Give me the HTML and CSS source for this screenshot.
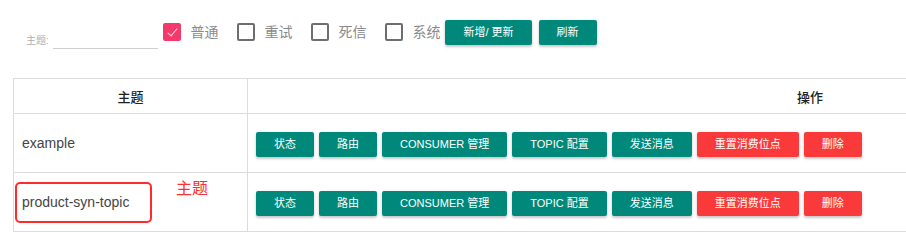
FILE: index.html
```html
<!DOCTYPE html>
<html lang="zh-CN">
<head>
    <meta charset="UTF-8">
    <title>Topic</title>
    <link rel="stylesheet" href="styles.css">
</head>
<body>
    <div class="toolbar">
        <div class="field">
            <span class="field-label">主题:</span>
            <input type="text" class="field-input">
        </div>
        <label class="check checked"><span class="box"></span><span class="check-text">普通</span></label>
        <label class="check"><span class="box"></span><span class="check-text">重试</span></label>
        <label class="check"><span class="box"></span><span class="check-text">死信</span></label>
        <label class="check last"><span class="box"></span><span class="check-text">系统</span></label>
        <button class="btn top-btn">新增/ 更新</button>
        <button class="btn top-btn">刷新</button>
    </div>

    <table class="topics">
        <thead>
            <tr>
                <th class="col-topic">主题</th>
                <th>操作</th>
            </tr>
        </thead>
        <tbody>
            <tr>
                <td class="topic-name">example</td>
                <td>
                    <div class="actions">
                        <button class="btn">状态</button>
                        <button class="btn">路由</button>
                        <button class="btn">CONSUMER 管理</button>
                        <button class="btn">TOPIC 配置</button>
                        <button class="btn">发送消息</button>
                        <button class="btn btn-red">重置消费位点</button>
                        <button class="btn btn-red">删除</button>
                    </div>
                </td>
            </tr>
            <tr>
                <td class="topic-name">product-syn-topic</td>
                <td>
                    <div class="actions">
                        <button class="btn">状态</button>
                        <button class="btn">路由</button>
                        <button class="btn">CONSUMER 管理</button>
                        <button class="btn">TOPIC 配置</button>
                        <button class="btn">发送消息</button>
                        <button class="btn btn-red">重置消费位点</button>
                        <button class="btn btn-red">删除</button>
                    </div>
                </td>
            </tr>
        </tbody>
    </table>

    <!-- annotation on the screenshot -->
    <div class="mark-box"></div>
    <div class="mark-text">主题</div>
</body>
</html>
```

FILE: styles.css
```css
html, body {
    overflow: hidden;
}
body {
    margin: 0;
    padding: 0;
    background-color: #fff;
    font-family: Roboto, "Noto Sans CJK SC", sans-serif;
    position: relative;
}
.toolbar {
    display: flex;
    align-items: flex-start;
    padding: 20px 0 0 26px;
    height: 78px;
    box-sizing: border-box;
}
.field {
    display: flex;
    align-items: flex-end;
    height: 29px;
}
.field-label {
    font-size: 10px;
    line-height: 12px;
    color: #b0b0b0;
    margin-right: 5px;
    margin-bottom: 2px;
}
.field-input {
    width: 105px;
    height: 16px;
    padding: 0;
    border: none;
    border-bottom: 1px solid #cfcfcf;
    outline: none;
}
.check {
    display: flex;
    align-items: center;
    margin-top: 3px;
    margin-left: 19px;
    height: 18px;
}
.toolbar .field + .check {
    margin-left: 5px;
}
.box {
    width: 18px;
    height: 18px;
    box-sizing: border-box;
    border: 2px solid #6e6e6e;
    border-radius: 2px;
    position: relative;
}
.check.checked .box {
    background-color: #f33a6a;
    border-color: #f33a6a;
}
.check.checked .box::after {
    content: "";
    position: absolute;
    left: 5px;
    top: 1px;
    width: 4px;
    height: 9px;
    border-right: 1px solid #fde0e8;
    border-bottom: 1px solid #fde0e8;
    transform: rotate(40deg);
}
.check-text {
    margin-left: 9px;
    font-size: 14px;
    line-height: 18px;
    color: #8a8a8a;
}
.btn {
    height: 25px;
    padding: 0 18px;
    border: none;
    border-radius: 2px;
    background-color: #00897b;
    color: #fff;
    font-family: "Liberation Sans", "Noto Sans CJK SC", sans-serif;
    font-size: 11px;
    line-height: 25px;
    white-space: nowrap;
    cursor: pointer;
    box-shadow: 0 2px 2px rgba(0, 0, 0, 0.14), 0 1px 4px rgba(0, 0, 0, 0.12);
}
.btn-red {
    background-color: #fa3a3a;
}
.top-btn {
    margin-left: 5px;
}
.top-btn + .top-btn {
    margin-left: 7px;
}
.topics {
    margin-left: 13px;
    width: 1360px;
    border-collapse: collapse;
}
.topics th,
.topics td {
    border: 1px solid #dcdcdc;
}
.topics th {
    height: 34px;
    padding: 0;
    font-size: 13px;
    font-weight: 500;
    color: #222;
    text-align: center;
}
.col-topic {
    width: 233px;
}
.topics td {
    height: 58px;
    padding: 0 8px;
}
.topic-name {
    font-family: "Liberation Sans", "Noto Sans CJK SC", sans-serif;
    font-size: 14px;
    color: #444;
}
.actions {
    display: flex;
    gap: 5px;
    padding-top: 2px;
}
.mark-box {
    position: absolute;
    left: 15px;
    top: 182px;
    width: 137px;
    height: 41px;
    box-sizing: border-box;
    border: 2px solid #ff2a2a;
    border-radius: 5px;
}
.mark-text {
    position: absolute;
    left: 176px;
    top: 179px;
    font-size: 16px;
    line-height: 20px;
    color: #ff3030;
}
```
